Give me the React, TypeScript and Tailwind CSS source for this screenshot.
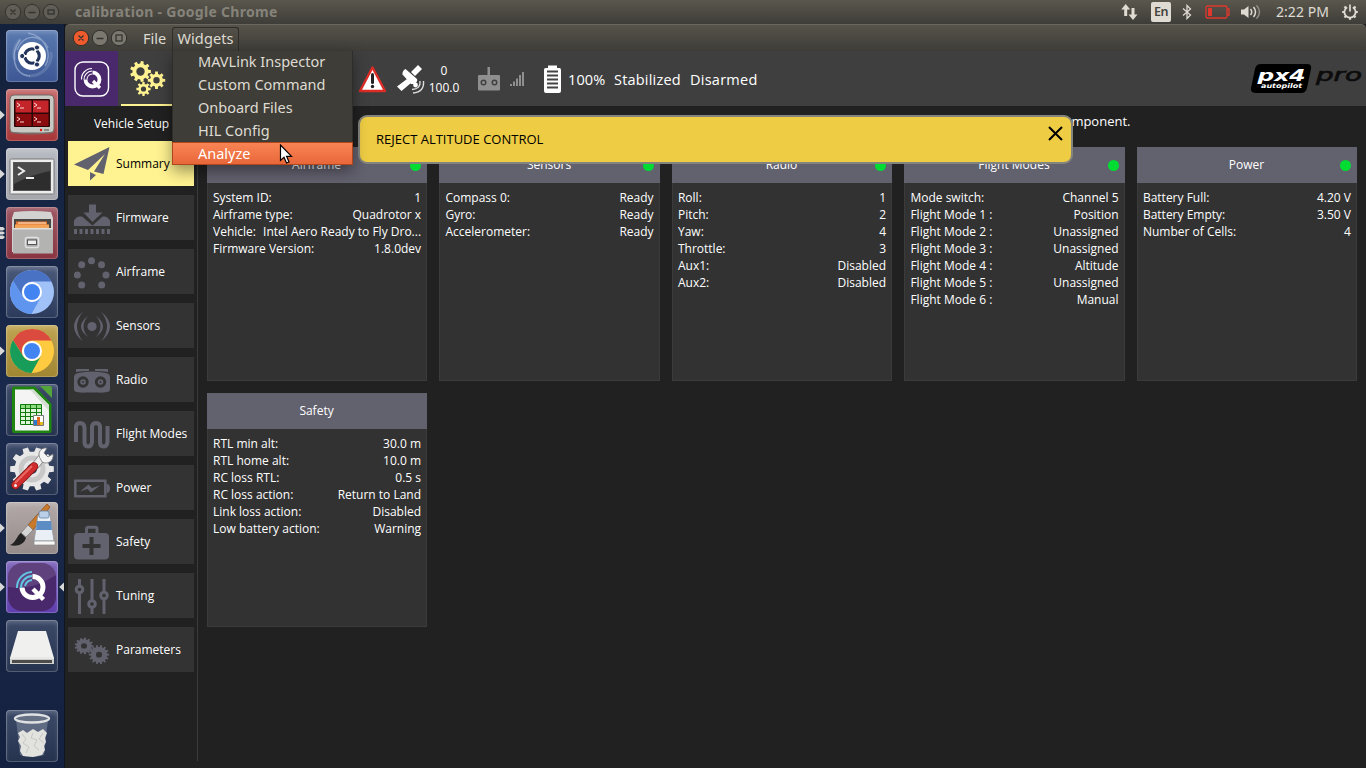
import React from "react";

const UB = "font-['Noto_Sans',sans-serif]";

function gearPath(cx: number, cy: number, ro: number, ri: number, n: number, hole: number) {
  let d = "";
  const s = (Math.PI * 2) / n;
  for (let i = 0; i < n; i++) {
    const a = i * s;
    const pts: [number, number][] = [
      [ri, a - s * 0.3],
      [ro, a - s * 0.2],
      [ro, a + s * 0.2],
      [ri, a + s * 0.3],
    ];
    pts.forEach(([r, t], j) => {
      d += `${i === 0 && j === 0 ? "M" : "L"}${(cx + r * Math.cos(t)).toFixed(2)} ${(cy + r * Math.sin(t)).toFixed(2)}`;
    });
  }
  return d + `ZM${cx - hole} ${cy}a${hole} ${hole} 0 1 0 ${hole * 2} 0a${hole} ${hole} 0 1 0 ${-hole * 2} 0Z`;
}

function WindowButtons({ active }: { active: boolean }) {
  const ring = active ? "#2f2e2a" : "#34332f";
  const fill = active ? "#7b7870" : "#605e57";
  const mark = "#34332f";
  return (
    <svg width="56" height="20" viewBox="0 0 56 20">
      <circle cx="9" cy="10" r="7.7" fill={active ? "#ef5b2c" : fill} stroke={ring} />
      <circle cx="28" cy="10" r="7.7" fill={fill} stroke={ring} />
      <circle cx="47" cy="10" r="7.7" fill={fill} stroke={ring} />
      <path d="M6.5 7.5l5 5m0-5l-5 5M24.500 10.500h7" stroke={mark} strokeWidth="1.300" />
      <rect x="44" y={active ? 7 : 8} width="6" height={active ? 6 : 4} fill="none" stroke={mark} strokeWidth="1.300" />
    </svg>
  );
}

function TopBar() {
  return (
    <header className={`flex h-6 shrink-0 items-center bg-linear-to-b from-[#5a574d] to-[#3e3d38] pl-1 text-[#dfdbd2] ${UB}`}>
      <WindowButtons active={false} />
      <span className="ml-[15px] w-[203px] pb-px whitespace-nowrap text-[14px] font-bold tracking-[0.3px] text-[#86837a]">
        calibration - Google Chrome
      </span>
      <svg className="ml-auto" width="18" height="18" viewBox="0 0 18 18" fill="#dfdbd2">
        <path d="M4.700 1L9.200 6.500H6.200V13H3.200V6.500H.2Z M12 17L7.500 11.500H10.500V5H13.500V11.500H16.500Z" />
      </svg>
      <span className="ml-[12px] flex h-5 w-5 items-center justify-center rounded-[2px] bg-[#dfdbd2] text-[12.500px] font-semibold tracking-[-0.5px] text-[#45433c]">
        En
      </span>
      <svg className="ml-[11px]" width="10" height="16" viewBox="0 0 10 16" fill="none" stroke="#dfdbd2" strokeWidth="1.3">
        <path d="M1 4.500L8.500 11L5 14.500V1.500L8.500 5L1 11.500" />
      </svg>
      <svg className="ml-[13px]" width="26" height="14" viewBox="0 0 26 14">
        <rect x="1" y="1" width="21" height="12" rx="1.500" fill="none" stroke="#e0382c" strokeWidth="1.300" />
        <path d="M22 4h2v6h-2" fill="none" stroke="#e0382c" strokeWidth="1.300" />
        <rect x="3" y="3" width="4" height="8" fill="#e0382c" />
      </svg>
      <svg className="ml-[10px]" width="21" height="16" viewBox="0 0 21 16" fill="none" stroke="#dfdbd2" strokeWidth="1.500">
        <path d="M0 5.500h3L7.500 2v12L3 10.500H0z" fill="#dfdbd2" stroke="none" />
        <path d="M9.500 5q2.500 3 0 6M12.500 3q4 5 0 10" />
        <path d="M15.500 1.200q6 6.800 0 13.600" opacity=".45" />
      </svg>
      <span className="ml-[14px] w-[55px] pb-px whitespace-nowrap text-[14px] tracking-[0.05px]">2:22 PM</span>
      <svg className="mr-[7px] ml-[10px]" width="18" height="18" viewBox="0 0 18 18" fill="none" stroke="#dfdbd2">
        <path
          d="M9 16.800v-2.500M1.200 9h2.500M16.800 9h-2.500M3.500 3.500l1.700 1.700M14.500 3.500l-1.700 1.700M3.500 14.500l1.700-1.700M14.500 14.500l-1.700-1.700"
          strokeWidth="2.200"
        />
        <path d="M6.200 4.200a5.600 5.600 0 1 0 5.600 0" strokeWidth="1.700" />
        <path d="M9 1.500v7" strokeWidth="1.700" />
      </svg>
    </header>
  );
}

function Tile({ bg, running, focused, children }: { bg: string; running?: number; focused?: boolean; children: React.ReactNode }) {
  return (
    <div className="flex h-[52px] w-[65px] shrink-0 items-center">
      <svg width="6" height="52" viewBox="0 0 6 52" fill="#d8d8d8">
        {running === 1 && <path d="M0 21.500L4.800 26L0 30.500z" />}
        {running === 3 && <path d="M0 20h3l2 2-2 1.500H0zM0 24.500h3l2 1.500-2 1.500H0zM0 28.500h3l2 1.500-2 2H0z" />}
      </svg>
      <div className={`h-[52px] w-[52px] rounded-[4px] shadow-[inset_0_0_0_1px_rgba(255,255,255,0.2),inset_0_3px_4px_rgba(255,255,255,0.18)] ${bg}`}>
        <svg width="52" height="52" viewBox="0 0 52 52">
          {children}
        </svg>
      </div>
      <svg width="6" height="52" viewBox="0 0 6 52" fill="#d8d8d8">
        {focused && <path d="M6 21.500L1.200 26L6 30.500z" />}
      </svg>
    </div>
  );
}

function ChromeIcon({ top, left, right }: { top: string; left: string; right: string }) {
  return (
    <>
      <circle cx="26" cy="26" r="22" fill={right} />
      <path d="M7 15A22 22 0 0 1 45.500 15.500H26A10.500 10.500 0 0 0 17 31Z" fill={top} />
      <path d="M7 15A22 22 0 0 0 25.500 48L35 31A10.500 10.500 0 0 1 17 31Z" fill={left} />
      <circle cx="26" cy="26" r="10" fill="#fff" />
      <circle cx="26" cy="26" r="8" fill="#4384f3" />
    </>
  );
}

function Launcher() {
  return (
    <nav className="flex w-[65px] shrink-0 flex-col gap-[7px] border-r border-[#10151f] bg-linear-to-b from-[#14213c] via-[#1a2a4d] to-[#152140] pt-[6px]">
      <Tile bg="bg-linear-to-b from-[#5a7ab0] to-[#3d5794]">
        <g fill="none" stroke="#a9bcdc" strokeOpacity=".6">
          <path d="M24 46C8 45 3 25 14 10M39 36C47 24 39 6 22 3M11 20C17 4 34 3 42 18" strokeWidth="1.500" />
          <path d="M45 22c2 12-8 24-22 24M9 30c-3-8 0-16 6-21" strokeWidth="3" strokeOpacity=".25" />
        </g>
        <circle cx="26" cy="26" r="14" fill="#fff" />
        <circle cx="26" cy="26" r="7.200" fill="none" stroke="#24355c" strokeWidth="3.200" />
        <path d="M26 26L15 26M26 26L32 16M26 26L32 36" stroke="#fff" strokeWidth="2" />
        <circle cx="26" cy="26" r="5.400" fill="#fff" />
        <g fill="#24355c" stroke="#fff" strokeWidth="1">
          <circle cx="16.200" cy="26" r="2.600" />
          <circle cx="31" cy="17.500" r="2.600" />
          <circle cx="31" cy="34.500" r="2.600" />
        </g>
      </Tile>
      <Tile bg="bg-linear-to-b from-[#c4686a] to-[#a83538]" running={1}>
        <rect x="4" y="6" width="44" height="38" rx="4" fill="#c9c9c3" stroke="#6f6a66" />
        <path d="M5 43q21 4 42 0" stroke="#77736f" fill="none" />
        <rect x="8" y="10" width="36" height="28" rx="1" fill="#2a0606" />
        <g fill="#8a0c0f">
          <rect x="9.500" y="11.500" width="16" height="12" fill="#c3252a" />
          <rect x="27" y="11.500" width="15.500" height="12" fill="#c3252a" />
          <rect x="9.500" y="25" width="16" height="12" />
          <rect x="27" y="25" width="15.500" height="12" />
        </g>
        <path d="M11 14l3 2-3 2M14 19h4M28 14l3 2-3 2M31 19h4M11 28l3 2-3 2M14 33h4M28 28l3 2-3 2M31 33h4" stroke="#fbd5d5" fill="none" />
        <circle cx="35" cy="41" r="1.200" fill="#e11" />
        <path d="M38 41h5" stroke="#8c8c88" strokeWidth="2" />
      </Tile>
      <Tile bg="bg-linear-to-b from-[#b9bbc3] to-[#a5a7ad]" running={1}>
        <rect x="4" y="11" width="44" height="35" rx="1.500" fill="#ededed" stroke="#777" />
        <rect x="7.500" y="14.500" width="37" height="28" fill="#2c2d2c" stroke="#555" />
        <path d="M8 15h36v8Q24 27 8 36z" fill="#4a4b4a" />
        <path d="M12 19l6 4-6 4" stroke="#eee" strokeWidth="2" fill="none" />
        <path d="M20 30h8" stroke="#eee" strokeWidth="2" />
      </Tile>
      <Tile bg="bg-linear-to-b from-[#9c5663] to-[#8a3441]" running={3}>
        <path d="M8 5Q26 3 45 5L47 11V45H6V11Z" fill="#d2d2d0" />
        <rect x="8" y="12" width="37" height="13" fill="#4a4642" />
        <path d="M10 14.500h31v8H10z" fill="#e2752d" />
        <path d="M9 17.500h34v4H9z" fill="#f2a558" />
        <path d="M12 16h28" stroke="#fff1d8" />
        <path d="M7 21.500h40v25H7z" fill="#b3b3b1" />
        <path d="M7 21h40v1.500H7z" fill="#dededc" />
        <rect x="19.500" y="30.500" width="13" height="10" rx="2" fill="#aaa" stroke="#e2e2e2" strokeWidth="1.500" />
        <rect x="21.500" y="33" width="9" height="4.500" fill="#eee" stroke="#555" />
      </Tile>
      <Tile bg="bg-linear-to-b from-[#4c5a7a] to-[#2c3a5b]">
        <ChromeIcon top="#4a72c4" left="#5f95ee" right="#a1c2f8" />
      </Tile>
      <Tile bg="bg-linear-to-b from-[#bfa553] to-[#a08631]" running={1}>
        <ChromeIcon top="#db4a3e" left="#179c5a" right="#fecb40" />
      </Tile>
      <Tile bg="bg-linear-to-b from-[#3c4a69] to-[#26334f]">
        <path d="M8 2.500H29L45.500 20V47Q45.500 49 43.500 49H8Q6 49 6 47V4.500Q6 2.500 8 2.500Z" fill="#1e860f" />
        <path d="M9 5.500H27.500L43 21V46.500H9z" fill="#f4f4f4" />
        <path d="M27.500 5.500L43 21V27L24 5.500z" fill="#d4ddd2" />
        <path d="M34 2h10q2 0 2 2v10z" fill="#53a53b" />
        <path d="M14 20h22v21H14z" fill="#dff5da" />
        <path d="M14 20h22v5H14z" fill="#8edb80" />
        <path d="M14.500 20.500h21v20h-21zM14 24.500h22M14 28.500h22M14 32.500h22M14 36.500h22M19.500 20v21M24.500 20v21M30.500 20v21" stroke="#127a0c" fill="none" />
        <path d="M27.500 31.500h10v10h-10z" fill="#fff" stroke="#777" />
        <path d="M28 36h3v5h-3z" fill="#2a7ad0" />
        <path d="M31 33h3v8h-3z" fill="#e06a20" />
        <path d="M34 38h3v3h-3z" fill="#e6bb1e" />
      </Tile>
      <Tile bg="bg-linear-to-b from-[#3c4a69] to-[#26334f]">
        <path d={gearPath(26, 26, 22, 17.500, 10, 5)} fill="#e7e7e7" fillRule="evenodd" />
        <circle cx="26" cy="26" r="11" fill="none" stroke="#c8c8c8" strokeWidth="5" />
        <path d="M29 23L37 13" stroke="#858585" strokeWidth="8" />
        <path d="M29 23L37 13" stroke="#efefef" strokeWidth="6.500" />
        <path d="M35 17C30 10 35 4 41 5L38 10L42 14L47 11C48 18 42 22 36 19Z" fill="#f3f3f3" stroke="#777" strokeWidth=".8" />
        <path d="M9.500 42L28 23.500" stroke="#7e1414" strokeWidth="8.500" strokeLinecap="round" />
        <path d="M9.500 42L28 23.500" stroke="#cf2d2d" strokeWidth="7" strokeLinecap="round" />
        <path d="M9 40L26 23" stroke="#e96a64" strokeWidth="2" />
        <circle cx="9.500" cy="42.500" r="1.500" fill="#eee" />
      </Tile>
      <Tile bg="bg-linear-to-b from-[#b3aaa8] to-[#948b8a]" running={1}>
        <path d="M41 2L44 5L27 28L22 23Z" fill="#c87a2c" stroke="#8a4b14" strokeWidth=".7" />
        <path d="M22 23L27 28L20 35L15 31Z" fill="#d5d5d5" stroke="#777" strokeWidth=".7" />
        <path d="M4 43C10 41 11 33 15 31L20 36C18 43 10 45 4 43Z" fill="#222" />
        <path d="M32 13h12l4 26H28z" fill="#e9eff4" stroke="#8b939b" strokeWidth=".7" />
        <path d="M31 19h14l1 9H30z" fill="#5b8dc4" />
        <rect x="33" y="9" width="10" height="7" rx="2" fill="#b9d0e8" stroke="#6282a6" strokeWidth=".8" />
        <path d="M28 39h21v4H28z" fill="#f7f7f7" stroke="#888" strokeWidth=".7" />
      </Tile>
      <Tile bg="bg-linear-to-b from-[#7d63bb] to-[#5f3fae]" running={1} focused>
        <rect x="2" y="2" width="48" height="48" rx="14" fill="#49286b" />
        <path d="M2 26Q26 30 50 14V14Q48 2 36 2H16Q2 2 2 16Z" fill="#fff" opacity=".12" />
        <path d="M26.500 15.500A10.500 10.500 0 1 1 16 26.500" fill="none" stroke="#fff" strokeWidth="5" />
        <path d="M27 28L37.500 38.500" stroke="#fff" strokeWidth="4.500" />
        <g fill="none" stroke="#63c3e2" strokeWidth="2">
          <path d="M11 27A15.500 15.500 0 0 1 26 11" />
          <path d="M15 27A11.500 11.500 0 0 1 26 15" />
          <path d="M19 25A8 8 0 0 1 26 19" />
        </g>
      </Tile>
      <Tile bg="bg-linear-to-b from-[#3c4a69] to-[#26334f]">
        <path d="M12 11H40L48 38H4Z" fill="#f0f0ef" />
        <path d="M4 37H48V44H4Z" fill="#d0d0ce" />
        <path d="M4 38H48" stroke="#fff" />
        <path d="M6 40H46V43H6Z" fill="#4c4c4b" />
      </Tile>
      <div className="mt-[31px]">
        <Tile bg="bg-linear-to-b from-[#3c4a69] to-[#26334f]">
          <path d="M10 9L14 45Q26 49 38 45L42 9Z" fill="#aeb8c4" opacity=".35" />
          <ellipse cx="26" cy="8.500" rx="17" ry="4" fill="#667084" stroke="#dfe1e2" strokeWidth="2.300" />
          <path d="M12 23l5-3 4 3 6-4 5 3 5-3 4 4-2 5 1 4-2 4 1 4-3 5-9 2-10-1-3-5 1-5-3-5 2-4z" fill="#e2e2df" />
          <path d="M16 24l4 5-3 4 6 4-3 6M27 23l-2 5 6 2-3 6 5 4M37 23l-4 6 5 4" stroke="#c6c6c4" fill="none" />
        </Tile>
      </div>
    </nav>
  );
}

function TitleBar() {
  return (
    <div className={`flex h-[27px] shrink-0 items-center rounded-t-[5px] border-t border-[#6a675e] bg-linear-to-b from-[#56534a] to-[#3e3d38] pl-[6.500px] text-[#dfdbd2] ${UB}`}>
      <WindowButtons active />
      <span className="ml-[15.500px] w-[29px] text-[14.500px] leading-[20px]">File</span>
      <span className="mt-[2px] flex h-[24px] w-[67px] items-center justify-center rounded-t-[3px] border border-b-0 border-[#2e2d29] pb-[3px] text-[14.500px] leading-[20px] tracking-[0.1px]">
        Widgets
      </span>
    </div>
  );
}

function Px4Logo() {
  return (
    <svg width="116" height="34" viewBox="0 0 116 34">
      <path d="M11 2H57Q62 2 61 7L57 26Q56 31 51 31H6Q0 31 1 26L5 7Q6 2 11 2Z" fill="#000" />
      <g fontFamily="DejaVu Sans, sans-serif" fontStyle="italic" fontWeight="bold">
        <text x="7.500" y="18.500" fontSize="16.500" fill="#fff" textLength="48" lengthAdjust="spacingAndGlyphs">px4</text>
        <text x="11" y="25.500" fontSize="6.500" fill="#fff" textLength="41" lengthAdjust="spacingAndGlyphs">autopilot</text>
        <text x="66" y="18.500" fontSize="17" fontWeight="normal" fill="#0c0c0c" stroke="#0c0c0c" strokeWidth=".6" textLength="46" lengthAdjust="spacingAndGlyphs">pro</text>
      </g>
    </svg>
  );
}

function Toolbar() {
  return (
    <div className="flex h-[55px] shrink-0 items-center bg-[#3f3f3f] text-[14.500px] text-white">
      <div className="flex h-full w-[53px] items-center justify-center bg-[#49286b]">
        <svg width="36" height="36" viewBox="0 0 36 36" fill="none" stroke="#fff">
          <rect x="1" y="1" width="33.500" height="34" rx="8" strokeWidth="1.400" />
          <path d="M18.500 11.500A7 7 0 1 1 11.500 18.500" strokeWidth="3.800" />
          <path d="M19 20L26 27" strokeWidth="3.200" />
          <path d="M7.500 18.500A10.500 10.500 0 0 1 18 7.500M10 18.500A8.500 8.500 0 0 1 18 10M13 18.500A5.500 5.500 0 0 1 18 13" strokeWidth="1.100" />
        </svg>
      </div>
      <div className="ml-[3px] h-full w-[53px] border-b-[2px] border-[#fff291]">
        <svg width="53" height="53" viewBox="0 0 53 53" fill="#fff291" fillRule="evenodd">
          <path d={gearPath(19.500, 20.500, 10.500, 8, 9, 4.200)} />
          <path d={gearPath(35.500, 29.300, 8.800, 6.500, 8, 3.200)} />
          <path d={gearPath(22.500, 38, 7.200, 5.200, 8, 2.600)} />
        </svg>
      </div>
      <svg className="ml-[184px]" width="29" height="28" viewBox="0 0 29 28">
        <path d="M14.500 2.500L27 26H2Z" fill="#fff" stroke="#dd2c26" strokeWidth="2.400" strokeLinejoin="round" />
        <path d="M14.500 9.500v8" stroke="#222" strokeWidth="3" strokeLinecap="round" />
        <circle cx="14.500" cy="21.500" r="1.700" fill="#222" />
      </svg>
      <svg className="ml-[9px]" width="30" height="30" viewBox="0 0 30 30" fill="#fff">
        <path d="M22 1L26 5L19 12L15 8ZM11 15L15 19L5.500 27L1 22.500Z" />
        <path d="M9.500 5L21 15Q22 18 18 20L15 20L6.500 10.500Q6 7 9.500 5Z" />
        <circle cx="19.500" cy="21" r="2.400" />
        <path d="M24 17Q25 25 16 25.500M27.500 17Q28.500 28 17 29" fill="none" stroke="#ddd" strokeWidth="1.400" />
      </svg>
      <div className="ml-[2px] flex w-[32px] flex-col items-center text-[12px] leading-[17px]">
        <span>0</span>
        <span>100.0</span>
      </div>
      <svg className="ml-[18px]" width="22" height="24" viewBox="0 0 22 24" fill="#8f8f8f">
        <rect x="9.500" y="0" width="2.500" height="9" />
        <rect x="0" y="8" width="22" height="15.500" rx="1" />
        <circle cx="5.500" cy="15.500" r="3" fill="#414141" />
        <circle cx="16.500" cy="15.500" r="3" fill="#414141" />
        <circle cx="5.500" cy="15.500" r="1.500" />
        <circle cx="16.500" cy="15.500" r="1.500" />
      </svg>
      <svg className="ml-[10px]" width="14" height="15" viewBox="0 0 14 15" fill="#8f8f8f">
        <path d="M0 13h2v2H0zM3 10.500h2V15H3zM6 7.500h2V15H6zM9 4h2v11H9zM12 1h2v14h-2z" />
      </svg>
      <svg className="ml-[19px]" width="19" height="30" viewBox="0 0 19 30">
        <path d="M5 1.500h9V4h2.500Q18 4 18 6v21q0 2-2 2H3q-2 0-2-2V6q0-2 1.500-2H5z" fill="#fff" />
        <path d="M4 7.500h11M4 11.500h11M4 15.500h11M4 19.500h11M4 23.500h11" stroke="#444" strokeWidth="1.800" />
      </svg>
      <span className="ml-[6px] w-[46px] pt-[2px] tracking-[0.1px]">100%</span>
      <span className="w-[76px] pt-[2px] tracking-[0.2px]">Stabilized</span>
      <span className="pt-[2px] tracking-[0.25px]">Disarmed</span>
      <div className="ml-auto">
        <Px4Logo />
      </div>
    </div>
  );
}

const setupItems: { name: string; icon: React.ReactNode }[] = [
  { name: "Summary", icon: <path d="M0 18.500L35.500 1L29.500 28L20 25.500L31 8L14 24Z M16 26L22 29L16 34.500Z" /> },
  {
    name: "Firmware",
    icon: (
      <>
        <path d="M15 4.500h7v8h6.500L18.500 22L9.500 12.500h5.500z" />
        <path d="M0 26V20.500Q3 16 6 16.500H8L18.500 25.500L28.500 16.500H30Q33 16 36 20.500V26z" />
        <path d="M0 29h3v5H0zM5.500 29h3v5h-3zM11 29h3v5h-3zM16.500 29h3v5h-3zM22 29h3v5h-3zM27.500 29h3v5h-3zM33 29h3v5h-3z" />
      </>
    ),
  },
  {
    name: "Airframe",
    icon: (
      <>
        {[[17.500, 6.700], [7.700, 10.700], [27.500, 10.700], [3.300, 21], [32, 21], [7.700, 31], [27.700, 31]].map(([x, y], i) => (
          <circle key={i} cx={x} cy={y} r="3.500" />
        ))}
      </>
    ),
  },
  {
    name: "Sensors",
    icon: (
      <>
        <circle cx="18" cy="18.500" r="4.600" />
        <path d="M9 3.500Q-9 18.500 9 33.500Q-3 18.500 9 3.500ZM14 8Q0 18.500 14 29Q5 18.500 14 8Z" />
        <path d="M27 3.500Q45 18.500 27 33.500Q39 18.500 27 3.500ZM22 8Q36 18.500 22 29Q31 18.500 22 8Z" />
      </>
    ),
  },
  {
    name: "Radio",
    icon: (
      <>
        <path d="M2 7h13v2Q7 9 2 10zM21 7h13v3Q29 9 21 9z" />
        <path d="M4 11Q18 8 32 11Q36 12 36 15V27Q36 30 33 30Q28 31 24 30.500H12Q8 31 3 30Q0 30 0 27V15Q0 12 4 11Z" />
        <g fill="#333">
          <circle cx="9" cy="20" r="5.700" />
          <circle cx="26.500" cy="20" r="5.700" />
        </g>
        <circle cx="9" cy="20" r="2.800" />
        <circle cx="26.500" cy="20" r="2.800" />
        <circle cx="9" cy="20" r="1" fill="#333" />
        <circle cx="26.500" cy="20" r="1" fill="#333" />
      </>
    ),
  },
  {
    name: "Flight Modes",
    icon: (
      <path
        d="M2 26V11.500Q2 7 6 7T10.500 11.500V26Q10.500 30.500 14 30.500T18 26V11.500Q18 7 22 7T26 11.500V26Q26 30.500 29.500 30.500T33.500 26V10"
        fill="none"
        stroke="#62616e"
        strokeWidth="4"
      />
    ),
  },
  {
    name: "Power",
    icon: (
      <>
        <path d="M1.300 10.800h30v15.400h-30z" fill="none" stroke="#62616e" strokeWidth="2.500" />
        <path d="M32.500 13.500Q36 14.500 36 18.500T32.500 23.500z" />
        <path d="M6 21.500L14.500 14.500L18 18L26 15.500L17 22.500L13.500 19Z" />
      </>
    ),
  },
  {
    name: "Safety",
    icon: (
      <>
        <path d="M12.500 9V5Q12.500 3.300 14 3.300H21.500Q23 3.300 23 5V9" fill="none" stroke="#62616e" strokeWidth="3" />
        <rect x="0" y="9" width="35" height="26.500" rx="4" />
        <path d="M17.500 13v18M8.500 22h18" stroke="#333" strokeWidth="4" />
      </>
    ),
  },
  {
    name: "Tuning",
    icon: (
      <g fill="none" stroke="#62616e" strokeWidth="3">
        <path d="M5.500 1v7M5.500 15v21M18 1v21M18 30v6M30 1v13M30 21v15" />
        <circle cx="5.500" cy="11.500" r="3.300" />
        <circle cx="18" cy="26" r="3.300" />
        <circle cx="30" cy="17.500" r="3.300" />
      </g>
    ),
  },
  {
    name: "Parameters",
    icon: (
      <g fillRule="evenodd">
        <path d={gearPath(10, 14.500, 9.500, 7.700, 13, 3)} transform="translate(0 1.200) scale(1 .88)" />
        <path d={gearPath(25, 23, 10.200, 8.200, 14, 3)} transform="translate(0 .8) scale(1 .95)" />
      </g>
    ),
  },
];

function Sidebar() {
  return (
    <aside className="flex h-[655px] w-[133px] shrink-0 flex-col gap-[9px] border-r border-[#3a3a3a] pl-[3px] text-[12px] text-white">
      <h2 className="flex h-[26px] items-end justify-center pr-[2px] leading-[17px]">Vehicle Setup</h2>
      {setupItems.map((it, i) => (
        <button
          key={it.name}
          className={`flex h-[45px] w-[126px] shrink-0 items-center pl-[6px] text-left whitespace-nowrap ${i === 0 ? "bg-[#fff291] text-black" : "bg-[#333333]"}`}
        >
          <svg className="shrink-0" width="36" height="36" viewBox="0 0 36 36" fill="#62616e">
            {it.icon}
          </svg>
          <span className="ml-[6px] pt-px">{it.name}</span>
        </button>
      ))}
    </aside>
  );
}

interface CardData {
  title: string;
  dot?: boolean;
  rows: [string, string][];
}

const cards: CardData[] = [
  {
    title: "Airframe",
    dot: true,
    rows: [["System ID:", "1"], ["Airframe type:", "Quadrotor x"], ["Vehicle:", "Intel Aero Ready to Fly Dro..."], ["Firmware Version:", "1.8.0dev"]],
  },
  { title: "Sensors", dot: true, rows: [["Compass 0:", "Ready"], ["Gyro:", "Ready"], ["Accelerometer:", "Ready"]] },
  {
    title: "Radio",
    dot: true,
    rows: [["Roll:", "1"], ["Pitch:", "2"], ["Yaw:", "4"], ["Throttle:", "3"], ["Aux1:", "Disabled"], ["Aux2:", "Disabled"]],
  },
  {
    title: "Flight Modes",
    dot: true,
    rows: [
      ["Mode switch:", "Channel 5"],
      ["Flight Mode 1 :", "Position"],
      ["Flight Mode 2 :", "Unassigned"],
      ["Flight Mode 3 :", "Unassigned"],
      ["Flight Mode 4 :", "Altitude"],
      ["Flight Mode 5 :", "Unassigned"],
      ["Flight Mode 6 :", "Manual"],
    ],
  },
  { title: "Power", dot: true, rows: [["Battery Full:", "4.20 V"], ["Battery Empty:", "3.50 V"], ["Number of Cells:", "4"]] },
  {
    title: "Safety",
    rows: [
      ["RTL min alt:", "30.0 m"],
      ["RTL home alt:", "10.0 m"],
      ["RC loss RTL:", "0.5 s"],
      ["RC loss action:", "Return to Land"],
      ["Link loss action:", "Disabled"],
      ["Low battery action:", "Warning"],
    ],
  },
];

function Card({ title, dot, rows }: CardData) {
  return (
    <section className="h-[234px] border border-t-0 border-[#3b3b3b] bg-[#323232]">
      <h3 className="relative -mx-px flex h-9 items-center justify-center bg-[#62616e] pr-px">
        {title}
        {dot && <span className="absolute top-[13px] right-[6px] h-[11px] w-[11px] rounded-full bg-[#00dc32]" />}
      </h3>
      <dl className="px-[5px] pt-[6px]">
        {rows.map(([k, v]) => (
          <div key={k} className="flex h-[17px] items-center justify-between whitespace-nowrap">
            <dt>{k}</dt>
            <dd>{v}</dd>
          </div>
        ))}
      </dl>
    </section>
  );
}

function WidgetsMenu() {
  return (
    <ul className={`absolute top-[51px] left-[172px] w-[181px] border border-t-0 border-[#2e2d29] bg-[#3e3d38] text-[14.500px] text-[#dfdbd2] shadow-[0_6px_14px_rgba(0,0,0,0.4)] ${UB}`}>
      {["MAVLink Inspector", "Custom Command", "Onboard Files", "HIL Config"].map((m) => (
        <li key={m} className="flex h-[23px] items-center pb-[2px] pl-[25px]">
          {m}
        </li>
      ))}
      <li className="-mx-px -mt-px -mb-px flex h-[23px] items-center border border-[#b0471c] bg-linear-to-b from-[#fa8454] to-[#e8673a] pl-[25px] text-white">Analyze</li>
    </ul>
  );
}

export default function App() {
  return (
    <div className="relative flex h-[768px] w-[1366px] flex-col overflow-hidden bg-[#1b2038] font-['Open_Sans',sans-serif]">
      <TopBar />
      <div className="flex min-h-0 flex-1">
        <Launcher />
        <main className="flex min-w-0 flex-1 flex-col bg-[#212121]">
          <TitleBar />
          <Toolbar />
          <div className="flex min-h-0 flex-1">
            <Sidebar />
            <div className="min-w-0 flex-1 pr-[9px] pl-[9px] text-[12px] text-white">
              <p className="flex h-[41px] items-center justify-center pb-[9px] text-[13px]">
                Below you will find a summary of the settings for your vehicle. To the left are the setup menus for each component.
              </p>
              <div className="grid grid-cols-5 gap-x-[12.400px] gap-y-3">
                {cards.map((c) => (
                  <Card key={c.title} {...c} />
                ))}
              </div>
            </div>
          </div>
        </main>
      </div>

      <div className="absolute top-[115px] left-[358px] flex h-[49px] w-[715px] items-center justify-between rounded-[9px] border-2 border-[#84847e] bg-[#eecc44] pr-[8px] pl-[16px] text-[13px] text-black">
        <span className="pt-px">REJECT ALTITUDE CONTROL</span>
        <svg className="mb-[13px]" width="15" height="15" viewBox="0 0 15 15" stroke="#000" strokeWidth="2">
          <path d="M1 1L14 14M14 1L1 14" />
        </svg>
      </div>

      <WidgetsMenu />

      <svg className="absolute top-[144px] left-[279px]" width="14" height="21" viewBox="0 0 14 21">
        <path d="M1.500 1V16.500L5 13.300L7.500 19L10 18L7.600 12.300H12.500Z" fill="#fff" stroke="#000" strokeWidth="1.200" />
      </svg>
    </div>
  );
}
